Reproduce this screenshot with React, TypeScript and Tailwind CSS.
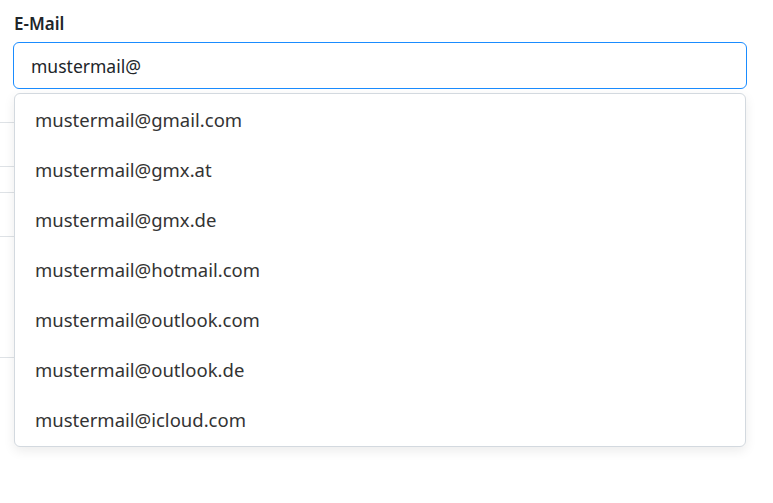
import React from "react";

const items = [
  "mustermail@gmail.com",
  "mustermail@gmx.at",
  "mustermail@gmx.de",
  "mustermail@hotmail.com",
  "mustermail@outlook.com",
  "mustermail@outlook.de",
  "mustermail@icloud.com",
];

export default function App() {
  return (
    <div
      className="w-[773px] h-[503px] bg-white text-[#212529] relative overflow-hidden"
      style={{ fontFamily: '"Noto Sans", "Open Sans", sans-serif' }}
    >
      <div className="px-[13px] pt-[12px]">
        <label className="block text-[17px] font-semibold leading-[24px] mb-[6px] pl-[1px]">E-Mail</label>
        <div className="relative">
          <input
            readOnly
            value="mustermail@"
            className="w-[734px] h-[47px] border border-[#1a8cff] rounded-[6px] pl-[17px] text-[17.5px] text-[#212529] outline-none"
            style={{ fontFamily: '"Noto Sans", "Open Sans", sans-serif' }}
          />
          {/* underlying form remnants */}
          <div className="w-[14px] -ml-[13px] mt-[33px]">
            <div className="h-[45px] border-y border-[#dee2e6]" />
            <div className="h-[25px]" />
            <div className="h-[45px] border-y border-[#dee2e6]" />
            <div className="h-[121px] border-b border-[#dee2e6]" />
          </div>
          <ul className="absolute left-[1px] top-[51px] w-[732px] bg-white border border-[#d3d9df] rounded-[6px] shadow-[0_4px_12px_rgba(0,0,0,0.08)] py-[1px]">
            {items.map((t) => (
              <li key={t} className="h-[50px] flex items-center pl-[20px] text-[18.5px] text-[#333]">
                {t}
              </li>
            ))}
          </ul>
        </div>
      </div>
    </div>
  );
}
